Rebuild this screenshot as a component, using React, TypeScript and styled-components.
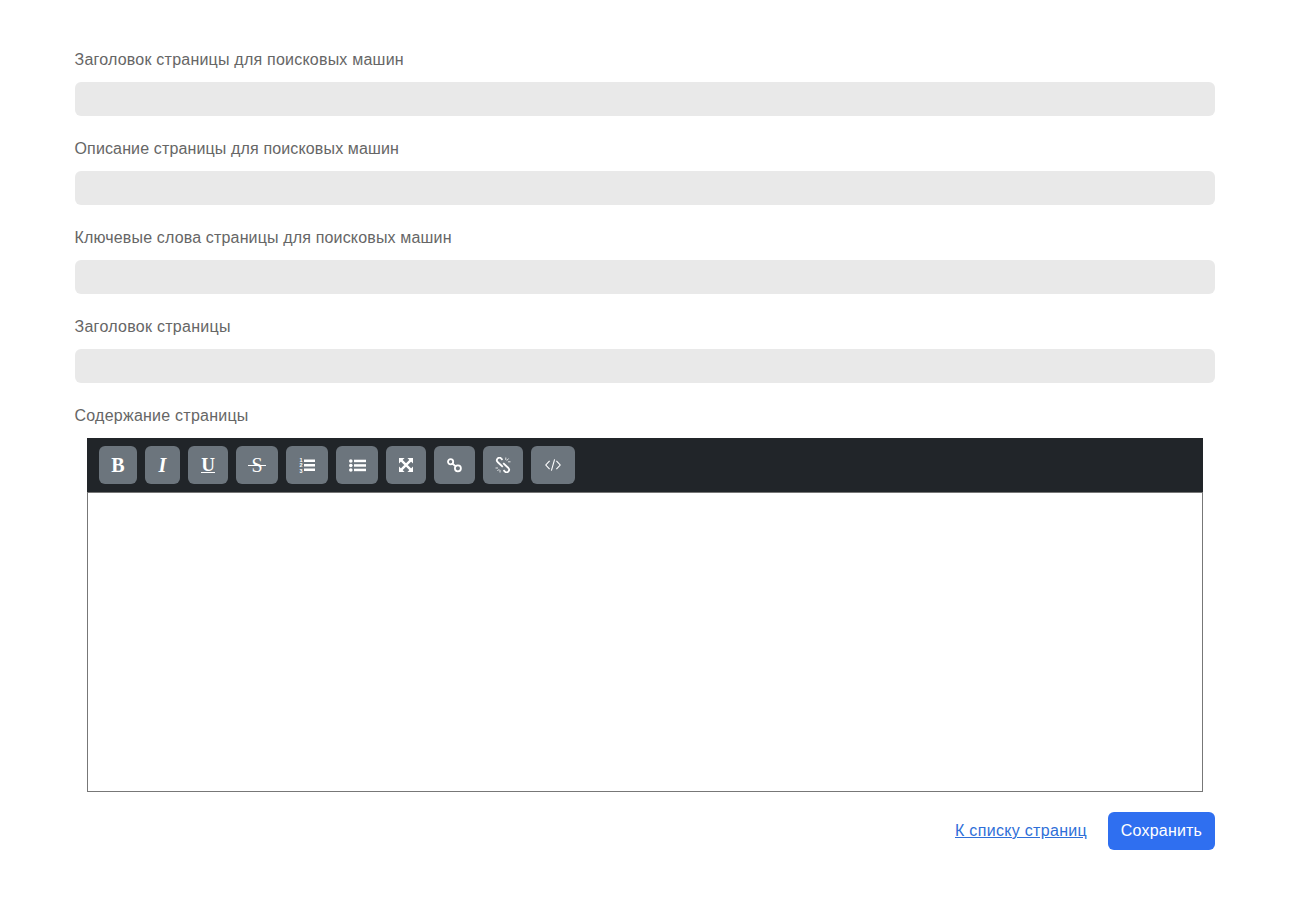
import React from "react";
import styled, { createGlobalStyle } from "styled-components";

const Global = createGlobalStyle`
  html, body { margin: 0; padding: 0; background: #fff; }
  * { box-sizing: border-box; }
  body { font-family: "Liberation Sans", Arial, sans-serif; font-size: 16px; line-height: 24px; color: #212529; }
`;

const Page = styled.form`
  width: 1298px;
  padding: 47px 83px 60px 75px;
  display: flex;
  flex-direction: column;
`;
const Field = styled.div`
  display: flex;
  flex-direction: column;
  margin-bottom: 20px;
`;
const Label = styled.label<{ $track: number }>`
  height: 24px;
  padding-top: 1px;
  margin-bottom: 11px;
  margin-left: -0.5px;
  color: #666;
  font-size: 16px;
  line-height: 24px;
  letter-spacing: ${(p) => p.$track}px;
`;
const Input = styled.div`
  height: 34px;
  background: #e9e9e9;
  border-radius: 6px;
`;
const EditorField = styled.div`
  display: flex;
  flex-direction: column;
`;
const Editor = styled.div`
  margin: 0 12px;
  display: flex;
  flex-direction: column;
`;
const Toolbar = styled.div`
  height: 54px;
  background: #212529;
  padding: 8px 12px;
  display: flex;
  gap: 8px;
`;
const ToolButton = styled.button<{ $w: number }>`
  width: ${(p) => p.$w}px;
  height: 38px;
  padding: 0;
  border: 0;
  border-radius: 6px;
  background: #6c757d;
  color: #fff;
  display: flex;
  align-items: center;
  justify-content: center;
`;
const Letter = styled.span<{ $size?: number; $italic?: boolean; $weight?: number }>`
  font-family: "Liberation Serif", "Times New Roman", serif;
  font-size: ${(p) => p.$size ?? 20}px;
  font-style: ${(p) => (p.$italic ? "italic" : "normal")};
  font-weight: ${(p) => p.$weight ?? 700};
  line-height: 1;
  position: relative;
  display: block;
`;
const UnderLetter = styled(Letter)`
  top: -1px;
  &::after {
    content: "";
    position: absolute;
    left: 0;
    right: 0;
    top: 17px;
    height: 1px;
    background: #fff;
  }
`;
const StruckLetter = styled(Letter)`
  &::after {
    content: "";
    position: absolute;
    left: -3px;
    right: -3px;
    top: 9.5px;
    height: 1px;
    background: #fff;
  }
`;
const Area = styled.div`
  height: 300px;
  border: 1px solid #777;
  background: #fff;
`;
const Actions = styled.div`
  margin-top: 20px;
  display: flex;
  justify-content: flex-end;
  align-items: center;
  gap: 21px;
`;
const BackLink = styled.a`
  color: #2f6fd8;
  text-decoration: underline;
  letter-spacing: 0.31px;
`;
const Save = styled.button`
  height: 38px;
  width: 107px;
  padding: 0;
  border: 0;
  border-radius: 6px;
  background: #2f6ff0;
  color: #fff;
  font-family: inherit;
  font-size: 16px;
  letter-spacing: 0.2px;
`;
const Numeral = styled.text`
  font-family: "Liberation Sans", Arial, sans-serif;
  font-size: 5.5px;
  font-weight: 700;
  fill: #fff;
`;

const ListOl = () => (
  <svg width="16" height="16" viewBox="0 0 16 16" fill="#fff">
    <Numeral x="0.6" y="5">1</Numeral>
    <Numeral x="0.6" y="10.4">2</Numeral>
    <Numeral x="0.6" y="15.8">3</Numeral>
    <rect x="5" y="2.5" width="11" height="2.5" />
    <rect x="5" y="7" width="11" height="2.5" />
    <rect x="5" y="11.5" width="11" height="2.5" />
  </svg>
);
const ListUl = () => (
  <svg width="17" height="13" viewBox="0 0 17 13" fill="#fff">
    <circle cx="1.8" cy="2" r="1.8" />
    <circle cx="1.8" cy="6.5" r="1.8" />
    <circle cx="1.8" cy="11" r="1.8" />
    <rect x="5" y="0.7" width="12" height="2.5" />
    <rect x="5" y="5.2" width="12" height="2.5" />
    <rect x="5" y="9.7" width="12" height="2.5" />
  </svg>
);
const ArrowsAlt = () => (
  <svg width="14" height="14" viewBox="0 0 15 15" fill="#fff" stroke="#fff">
    <path d="M2 2 L13 13 M13 2 L2 13" strokeWidth="2.6" />
    <path d="M0 0 H6 L0 6 Z M15 0 V6 L9 0 Z M0 15 V9 L6 15 Z M15 15 H9 L15 9 Z" stroke="none" />
  </svg>
);
const ChainLink = () => (
  <svg width="16" height="15" viewBox="0 0 16 15" fill="none" stroke="#fff" strokeWidth="1.8">
    <circle cx="3.6" cy="3.7" r="2.6" />
    <circle cx="10.9" cy="10.3" r="3" />
    <path d="M4.8 5.2 L9.2 8.6" />
  </svg>
);
const ChainUnlink = () => (
  <svg width="16" height="16" viewBox="0 0 16 16" fill="none" stroke="#fff">
    <path d="M7.5 2.8 L6.3 1.6 A2.2 2.2 0 0 0 2.6 5 L7.8 9.8" strokeWidth="1.8" />
    <path d="M8.2 6.2 L13.4 11 A2.2 2.2 0 0 1 9.7 14.4 L8.5 13.2" strokeWidth="1.8" />
    <path d="M10.8 0.5 V3 M13.6 1.5 L11.8 3.6 M15.5 4.8 H13 M0.5 11 H3 M2.4 14 L4.2 12.2 M5 15.5 V13" strokeWidth="0.8" />
  </svg>
);
const CodeTag = () => (
  <svg width="16" height="12" viewBox="0 0 16 12" fill="none" stroke="#fff" strokeWidth="1.1">
    <path d="M4.6 1.8 L0.8 6 L4.6 10.2 M11.4 1.8 L15.2 6 L11.4 10.2 M9.6 0.4 L6.4 11.6" />
  </svg>
);

const fields = [
  { text: "Заголовок страницы для поисковых машин", track: 0.22 },
  { text: "Описание страницы для поисковых машин", track: 0.14 },
  { text: "Ключевые слова страницы для поисковых машин", track: 0.16 },
  { text: "Заголовок страницы", track: 0.28 },
];

export default function App() {
  return (
    <>
      <Global />
      <Page>
        {fields.map((f) => (
          <Field key={f.text}>
            <Label $track={f.track}>{f.text}</Label>
            <Input />
          </Field>
        ))}
        <EditorField>
          <Label $track={0.24}>Содержание страницы</Label>
          <Editor>
            <Toolbar>
              <ToolButton type="button" $w={38}><Letter>B</Letter></ToolButton>
              <ToolButton type="button" $w={35}><Letter $italic>I</Letter></ToolButton>
              <ToolButton type="button" $w={40}><UnderLetter $size={19}>U</UnderLetter></ToolButton>
              <ToolButton type="button" $w={42}><StruckLetter $weight={400}>S</StruckLetter></ToolButton>
              <ToolButton type="button" $w={42}><ListOl /></ToolButton>
              <ToolButton type="button" $w={42}><ListUl /></ToolButton>
              <ToolButton type="button" $w={40}><ArrowsAlt /></ToolButton>
              <ToolButton type="button" $w={41}><ChainLink /></ToolButton>
              <ToolButton type="button" $w={40}><ChainUnlink /></ToolButton>
              <ToolButton type="button" $w={44}><CodeTag /></ToolButton>
            </Toolbar>
            <Area />
          </Editor>
          <Actions>
            <BackLink href="#">К списку страниц</BackLink>
            <Save type="button">Сохранить</Save>
          </Actions>
        </EditorField>
      </Page>
    </>
  );
}
